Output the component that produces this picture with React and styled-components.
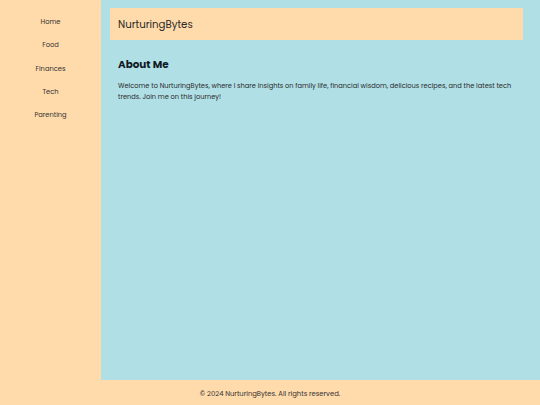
import React from 'react';
import styled, { createGlobalStyle } from 'styled-components';

const GlobalStyle = createGlobalStyle`
  html, body {
    margin: 0;
    padding: 0;
    height: 100%;
  }
  body {
    font-family: "Poppins", "Inter", "Noto Sans", sans-serif;
    color: #222;
  }
  #root {
    height: 100%;
  }
`;

const Page = styled.div`
  display: flex;
  flex-direction: column;
  height: 405px;
`;

const Body = styled.div`
  display: flex;
  flex: 1;
`;

const Sidebar = styled.nav`
  width: 101px;
  background: #ffdaab;
  display: flex;
  flex-direction: column;
  align-items: center;
  gap: 12.3px;
  padding-top: 16px;
`;

const NavLink = styled.a`
  font-size: 6.7px;
  line-height: 11px;
  color: #333;
  text-decoration: none;
`;

const Main = styled.main`
  flex: 1;
  background: #b0e0e6;
  padding: 8px 17px 8px 9px;
`;

const Header = styled.header`
  background: #ffdaab;
  padding: 9px 8px 7px;
  font-size: 10.2px;
  line-height: 16px;
  color: #2a2a2a;
`;

const Section = styled.section`
  padding: 17px 8px;
`;

const Title = styled.h2`
  margin: 0 0 7px;
  font-size: 10.4px;
  line-height: 16px;
  font-weight: 700;
  color: #111a24;
`;

const Text = styled.p`
  margin: 0;
  font-size: 6.65px;
  line-height: 11px;
  color: #2a2a2a;
`;

const Footer = styled.footer`
  height: 25px;
  background: #ffdaab;
  display: flex;
  align-items: center;
  justify-content: center;
  padding-top: 2px;
  box-sizing: border-box;
  font-size: 6.8px;
  color: #333;
`;

const links = ['Home', 'Food', 'Finances', 'Tech', 'Parenting'];

export default function App() {
  return (
    <Page>
      <GlobalStyle />
      <Body>
        <Sidebar>
          {links.map((l) => (
            <NavLink key={l} href="#">{l}</NavLink>
          ))}
        </Sidebar>
        <Main>
          <Header>NurturingBytes</Header>
          <Section>
            <Title>About Me</Title>
            <Text>
              Welcome to NurturingBytes, where I share insights on family life, financial wisdom, delicious recipes, and the latest tech trends. Join me on this journey!
            </Text>
          </Section>
        </Main>
      </Body>
      <Footer>© 2024 NurturingBytes. All rights reserved.</Footer>
    </Page>
  );
}
